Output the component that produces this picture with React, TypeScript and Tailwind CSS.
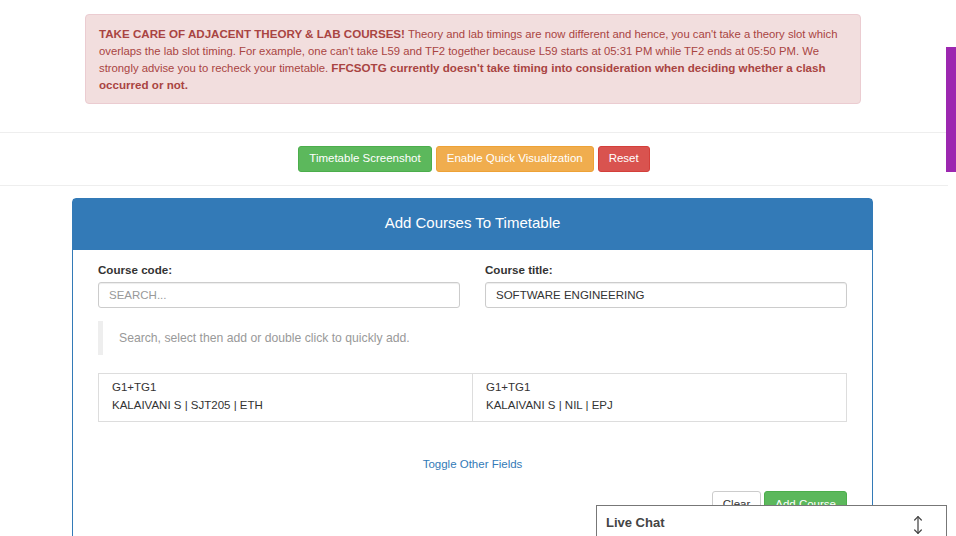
import { MoveVertical } from 'lucide-react';

// ── Bootstrap-ish palette ─────────────────────────────────────

const FONT = { fontFamily: '"Liberation Sans", Arial, sans-serif' };

function Btn({ children, className }: { children: React.ReactNode; className: string }) {
  return (
    <button className={`h-[26px] px-[10px] rounded-[3px] border text-[11.5px] leading-none ${className}`}>
      {children}
    </button>
  );
}

function SlotItem({ slot, info, className }: { slot: string; info: string; className?: string }) {
  return (
    <div className={`flex-1 border border-[#ddd] bg-white px-[13px] pt-[4px] pb-[7px] text-[11.5px] leading-[18px] text-[#333] ${className ?? ''}`}>
      <div>{slot}</div>
      <div>{info}</div>
    </div>
  );
}

export default function App() {
  return (
    <div className="relative w-[956px] h-[536px] overflow-hidden bg-white text-[#333]" style={FONT}>
      {/* Alert */}
      <div className="pt-[14px] px-[85px] pr-[95px]">
        <div className="rounded-[4px] border border-[#ebccd1] bg-[#f2dede] px-[13px] pt-[11px] pb-[9px] text-[11.3px] leading-[17px] text-[#a94442]">
          <b className="text-[11.6px] leading-none">TAKE CARE OF ADJACENT THEORY &amp; LAB COURSES!</b> Theory and lab timings are now different and hence,
          you can't take a theory slot which overlaps the lab slot timing. For example, one can't take L59 and TF2
          together because L59 starts at 05:31 PM while TF2 ends at 05:50 PM. We strongly advise you to recheck your
          timetable. <b className="text-[11.6px] leading-none">FFCSOTG currently doesn't take timing into consideration when deciding whether a clash occurred or not.</b>
        </div>
      </div>

      {/* Toolbar */}
      <div className="mt-[28px] mr-[8px] border-t border-b border-[#eee] py-[13px] flex justify-center gap-[4px]">
        <Btn className="bg-[#5cb85c] border-[#4cae4c] text-white">Timetable Screenshot</Btn>
        <Btn className="bg-[#f0ad4e] border-[#eea236] text-white">Enable Quick Visualization</Btn>
        <Btn className="bg-[#d9534f] border-[#d43f3a] text-white">Reset</Btn>
      </div>

      {/* Panel */}
      <div className="mt-[12px] ml-[72px] w-[801px] rounded-t-[4px] border border-[#337ab7] bg-white">
        <div className="h-[51px] pb-[3px] bg-[#337ab7] flex items-center justify-center text-[15px] text-white">
          Add Courses To Timetable
        </div>
        <div className="px-[25px] pt-[11px]">
          <div className="flex gap-[25px]">
            <div className="flex-1">
              <label className="block text-[11.6px] font-bold leading-[17px] mb-[4px]">Course code:</label>
              <input
                readOnly
                placeholder="SEARCH..."
                className="w-full h-[26px] rounded-[3px] border border-[#ccc] px-[10px] text-[11.5px] placeholder:text-[#999] shadow-[inset_0_1px_1px_rgba(0,0,0,0.075)] outline-none"
                style={FONT}
              />
            </div>
            <div className="flex-1">
              <label className="block text-[11.6px] font-bold leading-[17px] mb-[4px]">Course title:</label>
              <input
                readOnly
                value="SOFTWARE ENGINEERING"
                className="w-full h-[26px] rounded-[3px] border border-[#ccc] px-[10px] text-[11.5px] text-[#333] shadow-[inset_0_1px_1px_rgba(0,0,0,0.075)] outline-none"
                style={FONT}
              />
            </div>
          </div>

          <div className="mt-[13px] border-l-[5px] border-[#eee] pl-[16px] h-[34px] flex items-center text-[12.2px] text-[#999]">
            Search, select then add or double click to quickly add.
          </div>

          <div className="mt-[18px] flex">
            <SlotItem slot="G1+TG1" info="KALAIVANI S | SJT205 | ETH" />
            <SlotItem slot="G1+TG1" info="KALAIVANI S | NIL | EPJ" className="border-l-0 pb-[6px]" />
          </div>

          <div className="mt-[34px] text-center text-[11.5px] text-[#337ab7]">Toggle Other Fields</div>

          <div className="mt-[18px] flex justify-end gap-[3px]">
            <Btn className="bg-white border-[#ccc] text-[#333]">Clear</Btn>
            <Btn className="bg-[#5cb85c] border-[#4cae4c] text-white">Add Course</Btn>
          </div>
          <div className="h-[40px]" />
        </div>
      </div>

      {/* Side tab */}
      <div className="absolute right-0 top-[47px] w-[10px] h-[125px] bg-[#9c27b0]" />

      {/* Live chat */}
      <div className="absolute left-[596px] top-[505px] w-[351px] h-[40px] border border-[#777] bg-white flex items-start justify-between px-[9px] pt-[7px]">
        <span className="text-[13px] font-bold text-[#444]">Live Chat</span>
        <MoveVertical className="w-[20px] h-[22px] text-[#444] mr-[9px] mt-[1px]" strokeWidth={1.5} />
      </div>
    </div>
  );
}
